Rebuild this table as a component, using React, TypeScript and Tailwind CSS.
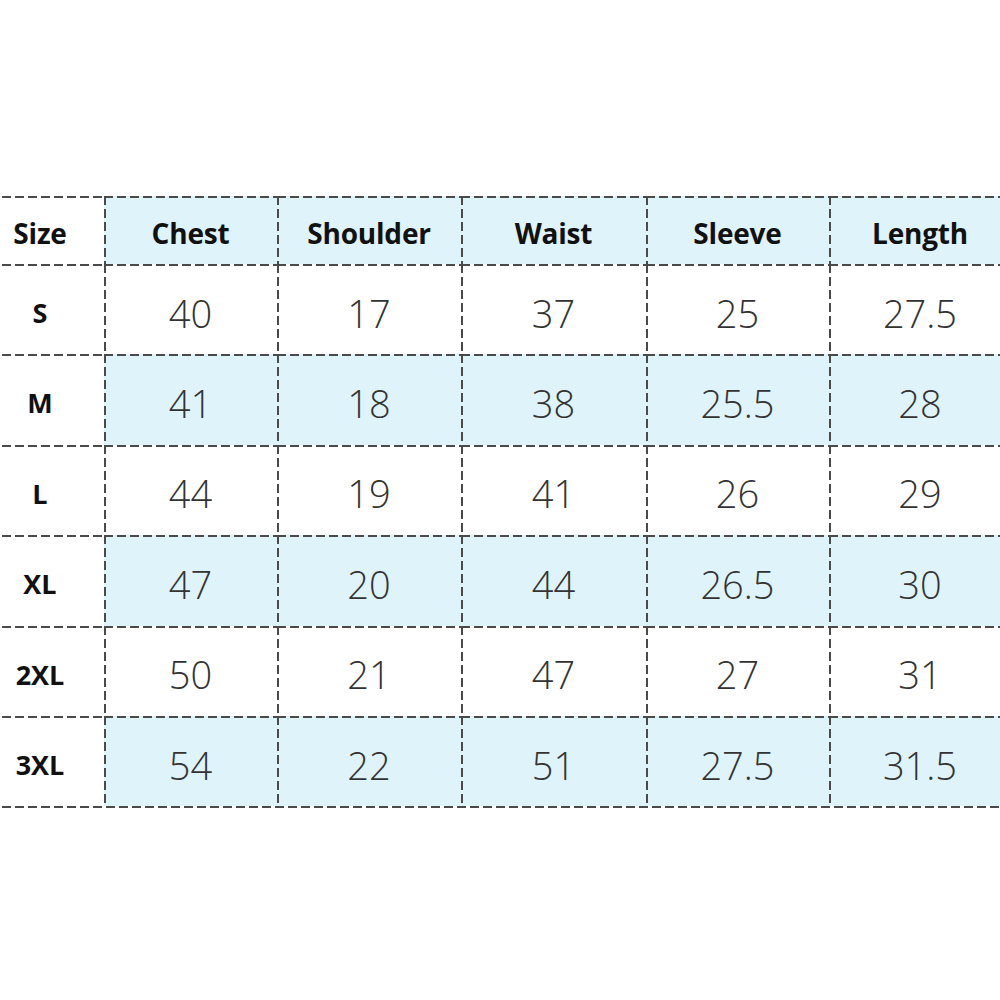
import React from "react";

const headers = ["Size", "Chest", "Shoulder", "Waist", "Sleeve", "Length"];
const rows: string[][] = [
  ["S", "40", "17", "37", "25", "27.5"],
  ["M", "41", "18", "38", "25.5", "28"],
  ["L", "44", "19", "41", "26", "29"],
  ["XL", "47", "20", "44", "26.5", "30"],
  ["2XL", "50", "21", "47", "27", "31"],
  ["3XL", "54", "22", "51", "27.5", "31.5"],
];

const lines =
  "[background-image:repeating-linear-gradient(90deg,#4a4a4a_0_9px,transparent_9px_13px),repeating-linear-gradient(180deg,#4a4a4a_0_9px,transparent_9px_13px)] [background-size:100%_2px,2px_100%] [background-repeat:no-repeat] [background-position:top_left,top_left]";

export default function App() {
  return (
    <div className="w-[1000px] h-[1000px] bg-white overflow-hidden" style={{ fontFamily: '"Open Sans", "Noto Sans", sans-serif' }}>
      <div className="pt-[196px] ml-[-24px] w-[1035px]">
        <div className="grid grid-cols-[128px_173px_184px_185px_183px_182px] grid-rows-[68px_repeat(6,90.4px)]">
          {headers.map((h, i) => (
            <div
              key={h}
              className={`${lines} ${i === 0 ? "bg-white" : "bg-[#dff3fb]"} flex items-center justify-center pt-[6px] text-[28px] font-bold text-[#111] tracking-[-0.2px]`}
            >
              {h}
            </div>
          ))}
          {rows.map((r, ri) =>
            r.map((c, ci) => {
              const blue = ri % 2 === 1 && ci > 0;
              return (
                <div
                  key={`${ri}-${ci}`}
                  className={`${lines} ${blue ? "bg-[#dff3fb]" : "bg-white"} flex items-center justify-center pt-[8px] ${
                    ci === 0
                      ? "text-[27px] font-bold text-[#111]"
                      : "text-[38px] font-light text-[#333]"
                  }`}
                >
                  {c}
                </div>
              );
            })
          )}
        </div>
        <div className="h-[2px] w-full bg-[repeating-linear-gradient(90deg,#4a4a4a_0_9px,transparent_9px_13px)]" />
      </div>
    </div>
  );
}
